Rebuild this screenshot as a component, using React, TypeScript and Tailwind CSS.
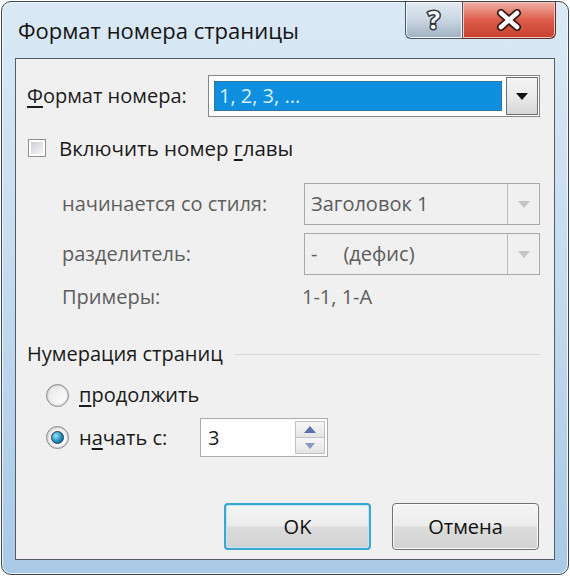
import React from 'react';

const font = { fontFamily: '"Open Sans", "Noto Sans", sans-serif' };

const DropArrow = ({ dim }: { dim?: boolean }) => (
    <svg width="14" height="9" viewBox="0 0 14 9">
        <path d="M1 1 L13 1 L7 8 Z" fill={dim ? '#c4c4c4' : '#111'} />
    </svg>
);

const Combo = ({ text }: { text: string }) => (
    <div className="flex h-[42px] w-[236px] border border-[#a9a9a9] bg-[#f0f0f0]">
        <div className="flex flex-1 items-center pl-[6px] text-[20px] text-[#5c5c5c] whitespace-pre">{text}</div>
        <div className="flex w-[32px] items-center justify-center border-l border-[#b8b8b8]">
            <DropArrow dim />
        </div>
    </div>
);

const Radio = ({ checked }: { checked?: boolean }) => (
    <div className="flex h-[23px] w-[23px] items-center justify-center rounded-full border border-[#8a8a8a] bg-gradient-to-br from-[#e6e6e6] to-[#ffffff] shadow-[inset_0_0_2px_#9a9a9a]">
        {checked && (
            <div className="h-[13px] w-[13px] rounded-full border border-[#1d3c55] bg-[radial-gradient(circle_at_35%_35%,#9fe3f7,#1f8fbd_55%,#0c4f74)]" />
        )}
    </div>
);

export default function App() {
    return (
        <div className="h-[576px] w-[570px] bg-white p-[1px]" style={font}>
            <div className="flex h-full flex-col rounded-[10px] border border-[#3f454c] bg-gradient-to-b from-[#dbe9f5] via-[#c3dbef] to-[#a9c9e6] shadow-[inset_0_0_0_1px_#eef6fc]">
                {/* title bar */}
                <div className="flex h-[56px] items-start justify-between">
                    <div className="pl-[16px] pt-[14px] text-[22px] leading-[28px] text-[#141414]">
                        Формат номера страницы
                    </div>
                    <div className="mr-[12px] flex">
                        <div className="flex h-[37px] w-[58px] items-center justify-center rounded-bl-[6px] border border-t-0 border-[#4b5560] bg-gradient-to-b from-[#e4ebf2] via-[#c9d5e1] to-[#9fb1c3] shadow-[inset_0_0_0_1px_#f3f7fb]">
                            <svg width="30" height="34" viewBox="0 0 30 34">
                                <text x="15" y="26" textAnchor="middle" fontSize="25" fontWeight="bold" fontFamily="Open Sans, sans-serif" fill="#fff" stroke="#2b3440" strokeWidth="3" paintOrder="stroke">?</text>
                            </svg>
                        </div>
                        <div className="flex h-[37px] w-[93px] items-center justify-center rounded-br-[6px] border border-l-0 border-t-0 border-[#5a2f2a] bg-gradient-to-b from-[#eeb1a8] via-[#dc5b49] to-[#c8402e] shadow-[inset_0_0_0_1px_#f3c8c0]">
                            <svg width="28" height="22" viewBox="0 0 28 22">
                                <path d="M6 4 L22 18 M22 4 L6 18" stroke="#3a1a16" strokeWidth="8" strokeLinecap="round" />
                                <path d="M6 4 L22 18 M22 4 L6 18" stroke="#ffffff" strokeWidth="4.5" strokeLinecap="round" />
                            </svg>
                        </div>
                    </div>
                </div>

                {/* client area */}
                <div className="mx-[13px] mb-[14px] flex flex-1 flex-col border border-[#505c68] bg-[#f0f0f0] pl-[11px] pr-[14px] text-[20px] text-[#1a1a1a]">
                    <div className="mt-[16px] flex h-[42px] items-center justify-between">
                        <span>
                            <u className="underline-offset-[3px]">Ф</u>ормат номера:
                        </span>
                        <div className="flex h-[42px] w-[332px] border border-[#828790] bg-white">
                            <div className="flex flex-1 items-center p-[5px] pr-[3px]">
                                <div className="flex h-full w-full items-center border border-dotted border-[#5a5a5a] bg-[#0f8fe0] pl-[4px] text-[20px] text-[#d8f0ff]">
                                    1, 2, 3, ...
                                </div>
                            </div>
                            <div className="m-[1px] flex w-[32px] items-center justify-center border border-[#707070] bg-gradient-to-b from-[#f4f4f4] via-[#ebebeb] to-[#d6d6d6]">
                                <DropArrow />
                            </div>
                        </div>
                    </div>

                    <div className="mt-[18px] flex h-[26px] items-center gap-[13px] pl-[1px]">
                        <div className="flex h-[18px] w-[18px] items-center justify-center border border-[#8e8f8f] bg-white">
                            <div className="h-[12px] w-[12px] bg-gradient-to-br from-[#cbcfd5] to-[#f6f6f6]" />
                        </div>
                        <span className="text-[20.5px]">
                            Включить номер <u className="underline-offset-[3px]">г</u>лавы
                        </span>
                    </div>

                    <div className="pl-[35px] text-[#5e5e5e]">
                        <div className="mt-[22px] flex items-center justify-between">
                            <span>начинается со стиля:</span>
                            <Combo text="Заголовок 1" />
                        </div>
                        <div className="mt-[8px] flex items-center justify-between">
                            <span>разделитель:</span>
                            <Combo text="-     (дефис)" />
                        </div>
                        <div className="mt-[10px] flex h-[24px] items-center">
                            <span className="w-[240px]">Примеры:</span>
                            <span>1-1, 1-A</span>
                        </div>
                    </div>

                    <div className="mt-[33px] flex h-[24px] items-center gap-[12px]">
                        <span>Нумерация страниц</span>
                        <div className="h-[1px] flex-1 bg-[#d5dade]" />
                    </div>

                    <div className="mt-[17px] flex h-[24px] items-center gap-[10px] pl-[19px]">
                        <Radio />
                        <span>
                            <u className="underline-offset-[3px]">п</u>родолжить
                        </span>
                    </div>
                    <div className="mt-[11px] flex items-center pl-[19px]">
                        <Radio checked />
                        <span className="ml-[10px] w-[121px]">
                            н<u className="underline-offset-[3px]">а</u>чать с:
                        </span>
                        <div className="flex h-[39px] w-[128px] border border-[#abadb3] bg-white">
                            <div className="flex flex-1 items-center pl-[7px] text-[20px]">3</div>
                            <div className="m-[2px] flex w-[30px] flex-col border border-[#c2c2c2]">
                                <div className="flex flex-1 items-center justify-center border-b border-[#c2c2c2] bg-gradient-to-b from-[#f8f8f8] to-[#e4e4e4]">
                                    <svg width="12" height="7" viewBox="0 0 12 7">
                                        <path d="M6 0 L12 7 L0 7 Z" fill="#5b6fa8" />
                                    </svg>
                                </div>
                                <div className="flex flex-1 items-center justify-center bg-gradient-to-b from-[#f8f8f8] to-[#e4e4e4]">
                                    <svg width="10" height="6" viewBox="0 0 10 6">
                                        <path d="M0 0 L10 0 L5 6 Z" fill="#8a97bf" />
                                    </svg>
                                </div>
                            </div>
                        </div>
                    </div>

                    <div className="mb-[9px] mt-auto flex justify-end gap-[21px] pr-[1px]">
                        <button className="h-[47px] w-[147px] rounded-[4px] border-2 border-[#3aa7d0] bg-[linear-gradient(#f4f4f4_0%,#ececec_48%,#dcdcdc_52%,#d2d2d2_100%)] text-[20px] text-[#111] shadow-[inset_0_0_0_1px_#bfe6f4]">
                            OK
                        </button>
                        <button className="h-[47px] w-[147px] rounded-[4px] border border-[#707070] bg-[linear-gradient(#f4f4f4_0%,#ececec_48%,#dcdcdc_52%,#d2d2d2_100%)] text-[20px] text-[#111] shadow-[inset_0_0_0_1px_#fbfbfb]">
                            Отмена
                        </button>
                    </div>
                </div>
            </div>
        </div>
    );
}
